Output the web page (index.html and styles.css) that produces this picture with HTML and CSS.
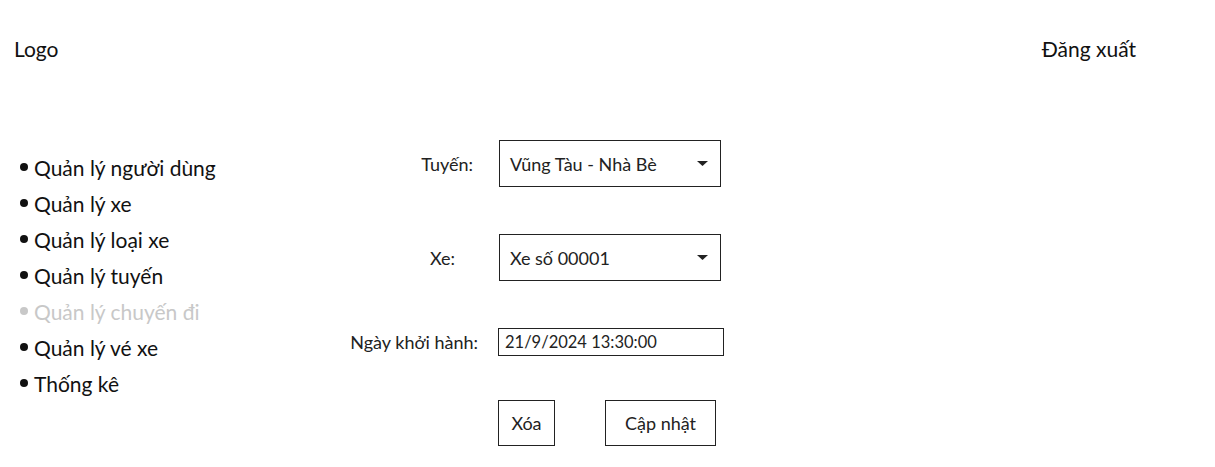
FILE: index.html
```html
<!DOCTYPE html>
<html lang="vi">
<head>
<meta charset="utf-8">
<title>Quản lý chuyến đi</title>
<link rel="stylesheet" href="styles.css">
</head>
<body>
<header class="topbar">
  <div class="logo">Logo</div>
  <a class="logout" href="#">Đăng xuất</a>
</header>
<div class="content">
  <nav class="sidebar">
    <ul class="menu">
      <li class="menu-item">Quản lý người dùng</li>
      <li class="menu-item">Quản lý xe</li>
      <li class="menu-item">Quản lý loại xe</li>
      <li class="menu-item">Quản lý tuyến</li>
      <li class="menu-item menu-item--active">Quản lý chuyến đi</li>
      <li class="menu-item">Quản lý vé xe</li>
      <li class="menu-item">Thống kê</li>
    </ul>
  </nav>
  <main class="form">
    <div class="row row--route">
      <label class="label label--route">Tuyến:</label>
      <div class="select">
        <span class="select-text">Vũng Tàu - Nhà Bè</span>
        <svg class="caret" width="11" height="5" viewBox="0 0 11 5"><path d="M0 0H11L5.5 5Z" fill="#222"/></svg>
      </div>
    </div>
    <div class="row row--bus">
      <label class="label label--bus">Xe:</label>
      <div class="select">
        <span class="select-text">Xe số 00001</span>
        <svg class="caret" width="11" height="5" viewBox="0 0 11 5"><path d="M0 0H11L5.5 5Z" fill="#222"/></svg>
      </div>
    </div>
    <div class="row row--date">
      <label class="label label--date">Ngày khởi hành:</label>
      <div class="input">21/9/2024 13:30:00</div>
    </div>
    <div class="row row--actions">
      <button class="btn btn--delete">Xóa</button>
      <button class="btn btn--update">Cập nhật</button>
    </div>
  </main>
</div>
</body>
</html>
```

FILE: styles.css
```css
html, body {
  margin: 0;
  padding: 0;
  background: #fff;
}
body {
  font-family: "Lato", "Noto Sans", sans-serif;
  color: #222;
}
.topbar {
  display: flex;
  justify-content: space-between;
  align-items: center;
  height: 96px;
  padding: 0 79px 0 14px;
}
.logo, .logout {
  font-size: 21px;
  color: #111;
  text-decoration: none;
}
.content {
  display: flex;
  padding-top: 44px;
}
.sidebar {
  width: 330px;
  flex: none;
}
.menu {
  list-style: none;
  margin: 9px 0 0 0;
  padding: 0 0 0 20px;
}
.menu-item {
  display: flex;
  align-items: center;
  height: 36px;
  font-size: 21px;
  color: #111;
}
.menu-item::before {
  content: "";
  width: 8px;
  height: 8px;
  border-radius: 50%;
  background: currentColor;
  margin-right: 6px;
}
.menu-item--active {
  color: #c8c8c8;
}
.form {
  display: flex;
  flex-direction: column;
}
.row {
  display: flex;
  align-items: center;
}
.label {
  width: 168px;
  box-sizing: border-box;
  text-align: right;
  font-size: 18px;
  color: #222;
}
.label--route { padding-right: 25px; }
.label--bus { padding-right: 43px; }
.label--date { padding-right: 20px; }
.row--bus { margin-top: 47px; }
.row--date { margin-top: 47px; }
.row--actions { margin-top: 44px; padding-left: 168px; gap: 50px; }
.select {
  width: 222px;
  height: 47px;
  box-sizing: border-box;
  border: 1px solid #222;
  display: flex;
  align-items: center;
  justify-content: space-between;
  padding: 0 12px 0 10px;
  font-size: 18px;
  margin-left: 1px;
}
.caret { display: block; }
.input {
  width: 226px;
  height: 28px;
  box-sizing: border-box;
  border: 1px solid #222;
  display: flex;
  align-items: center;
  padding: 0 6px;
  font-size: 16.5px;
}
.btn {
  height: 46px;
  box-sizing: border-box;
  border: 1px solid #222;
  background: #fff;
  font-family: inherit;
  font-size: 18px;
  color: #222;
  padding: 0;
}
.btn--delete { width: 57px; }
.btn--update { width: 111px; }
```
